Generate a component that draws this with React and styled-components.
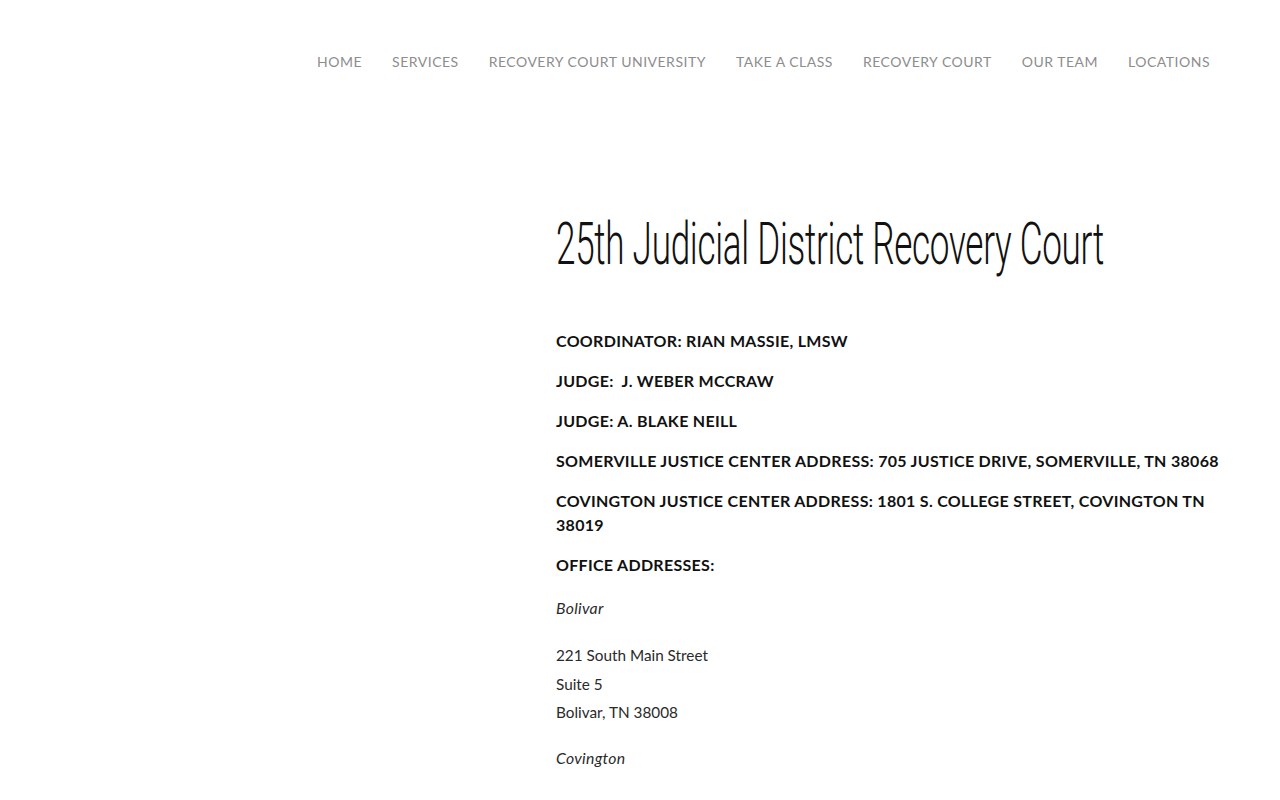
import React from 'react';
import styled, { createGlobalStyle } from 'styled-components';

const GlobalStyle = createGlobalStyle`
  html, body {
    margin: 0;
    padding: 0;
    background: #fff;
    font-family: Lato, "Open Sans", Arial, sans-serif;
    overflow: hidden;
  }
`;

const links = [
  'HOME',
  'SERVICES',
  'RECOVERY COURT UNIVERSITY',
  'TAKE A CLASS',
  'RECOVERY COURT',
  'OUR TEAM',
  'LOCATIONS',
];

const App = () => {
  return (
    <Page>
      <GlobalStyle />
      <Header>
        <Nav>
          {links.map((l) => (
            <NavLink key={l} href="#">{l}</NavLink>
          ))}
        </Nav>
      </Header>
      <Main>
        <Content>
          <Title>25th Judicial District Recovery Court</Title>
          <Strong>COORDINATOR: RIAN MASSIE, LMSW</Strong>
          <Strong>JUDGE:&nbsp; J. WEBER MCCRAW</Strong>
          <Strong>JUDGE: A. BLAKE NEILL</Strong>
          <Strong>SOMERVILLE JUSTICE CENTER ADDRESS: 705 JUSTICE DRIVE, SOMERVILLE, TN 38068</Strong>
          <Strong>COVINGTON JUSTICE CENTER ADDRESS: 1801 S. COLLEGE STREET, COVINGTON TN 38019</Strong>
          <Strong>OFFICE ADDRESSES:</Strong>
          <Office>Bolivar</Office>
          <Address>
            221 South Main Street<br />
            Suite 5<br />
            Bolivar, TN 38008
          </Address>
          <Office>Covington</Office>
          <Address>
            100 West Washington Street<br />
            Covington, TN 38019
          </Address>
        </Content>
      </Main>
    </Page>
  );
};

const Page = styled.div`
  width: 1280px;
  height: 800px;
  overflow: hidden;
`;

const Header = styled.header`
  display: flex;
  justify-content: flex-end;
  padding: 52px 70px 0 0;
`;

const Nav = styled.nav`
  display: flex;
  gap: 30px;
`;

const NavLink = styled.a`
  font-family: Lato, "Open Sans", Arial, sans-serif;
  font-size: 14px;
  letter-spacing: 0.5px;
  color: #8d8d8d;
  text-decoration: none;
  line-height: 20px;
`;

const Main = styled.main`
  display: flex;
  padding: 137px 0 0 556px;
`;

const Content = styled.div`
  width: 684px;
`;

const Title = styled.h1`
  display: inline-block;
  margin: 0 0 50px;
  font-family: Roboto, sans-serif;
  font-weight: 300;
  font-size: 60px;
  line-height: 70px;
  color: #111;
  white-space: nowrap;
  transform: scaleX(0.585);
  transform-origin: left center;
  letter-spacing: -0.5px;
`;

const Strong = styled.p`
  margin: 0 0 16px;
  font-family: Lato, "Open Sans", Arial, sans-serif;
  font-weight: 700;
  font-size: 16px;
  letter-spacing: 0.3px;
  line-height: 24px;
  color: #111;
`;

const Office = styled.p`
  margin: 19px 0 21px;
  font-style: italic;
  font-size: 15.8px;
  letter-spacing: 0.3px;
  line-height: 24px;
  color: #2a2a2a;
`;

const Address = styled.p`
  margin: 0 0 19px;
  font-size: 15.3px;
  line-height: 28.5px;
  color: #2a2a2a;
`;

export default App;
